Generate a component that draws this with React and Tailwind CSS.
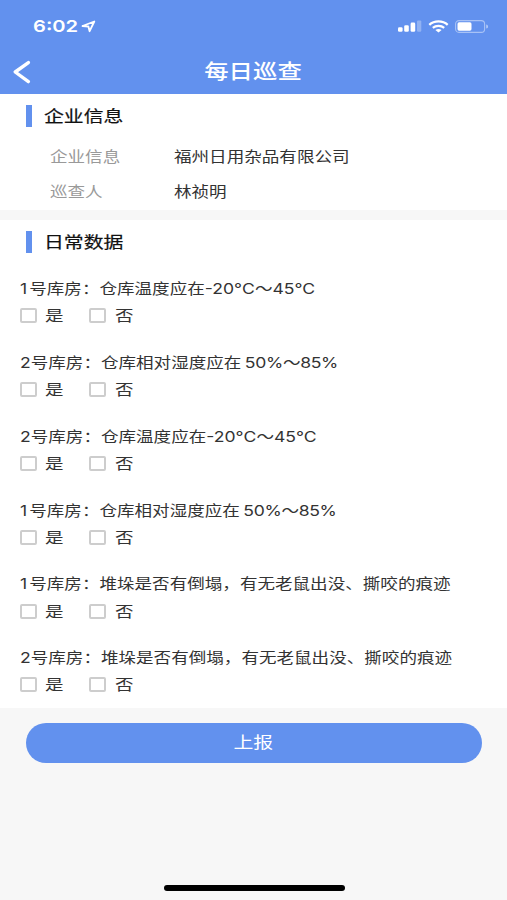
const COMPANY = [
  { label: '企业信息', value: '福州日用杂品有限公司' },
  { label: '巡查人', value: '林祯明' },
];

const QUESTIONS = [
  { room: '1', text: '号库房：仓库温度应在', range: '-20°C～45°C' },
  { room: '2', text: '号库房：仓库相对湿度应在', range: ' 50%～85%' },
  { room: '2', text: '号库房：仓库温度应在', range: '-20°C～45°C' },
  { room: '1', text: '号库房：仓库相对湿度应在', range: ' 50%～85%' },
  { room: '1', text: '号库房：堆垛是否有倒塌，有无老鼠出没、撕咬的痕迹' },
  { room: '2', text: '号库房：堆垛是否有倒塌，有无老鼠出没、撕咬的痕迹' },
];

// Text on this screen is set wider than its natural proportions.
function Wide({ origin = 'origin-left', className = '', children }) {
  return (
    <span className={`inline-block whitespace-pre scale-x-[1.22] ${origin} ${className}`}>
      {children}
    </span>
  );
}

function StatusBar() {
  return (
    <div className="flex h-[49px] items-center pt-[3px] pl-[33px] pr-[18px]">
      <Wide className="w-[38px] text-[16.5px] leading-none font-semibold">6:02</Wide>
      <svg className="ml-[10px] h-[13px] w-[15px]" viewBox="0 0 15 13" fill="none">
        <path d="M1.5 6 L13.3 1.5 L8.6 11.2 L7.4 6.5 Z" stroke="currentColor" strokeWidth="1.8" strokeLinejoin="round" />
      </svg>
      <svg className="ml-auto h-[12px] w-[24px]" viewBox="0 0 24 12" fill="currentColor">
        <rect x="0" y="7.2" width="4.6" height="4.6" rx="1.3" />
        <rect x="6.2" y="5.2" width="4.6" height="6.6" rx="1.3" />
        <rect x="12.6" y="2.6" width="4.6" height="9.2" rx="1.3" />
        <rect x="19" y="0.4" width="4.3" height="11.4" rx="1.2" opacity="0.3" />
      </svg>
      <svg className="ml-[6px] h-[13px] w-[21px]" viewBox="0 0 21 13" fill="none" stroke="currentColor">
        <path d="M1.3 4.8 C6.3 0.2 14.7 0.2 19.7 4.8" strokeWidth="2.3" />
        <path d="M4.8 7.9 C8 5.2 13 5.2 16.2 7.9" strokeWidth="2.2" />
        <path d="M7.4 9.9 C9.2 8.6 11.8 8.6 13.6 9.9 L10.5 12.6 Z" fill="currentColor" stroke="none" />
      </svg>
      <svg className="ml-[6.5px] h-[13px] w-[34px]" viewBox="0 0 34 13" fill="none">
        <rect x="0.6" y="0.6" width="29" height="11.8" rx="3.4" stroke="currentColor" strokeWidth="1.1" opacity="0.45" />
        <rect x="2.5" y="2.3" width="14" height="8.4" rx="1.6" fill="currentColor" />
        <path d="M31.2 4.4 C33.7 5 33.7 8 31.2 8.6 Z" fill="currentColor" opacity="0.5" />
      </svg>
    </div>
  );
}

function NavBar() {
  return (
    <div className="grid h-[45px] grid-cols-[1fr_auto_1fr] items-center pr-[2px]">
      <button className="ml-[12px] w-[20px]" aria-label="返回">
        <svg className="h-[24px] w-[20px]" viewBox="0 0 20 24" fill="none">
          <path d="M16.4 2.6 L3.2 12 L16.4 21.6" stroke="currentColor" strokeWidth="3.4" strokeLinecap="round" strokeLinejoin="round" />
        </svg>
      </button>
      <h1 className="flex text-[20px] leading-none font-medium">
        <Wide origin="origin-center">每日巡查</Wide>
      </h1>
    </div>
  );
}

function SectionTitle({ children }) {
  return (
    <div className="flex h-[22px] items-center pl-[26px] text-[#111]">
      <span className="h-[22px] w-[6px] bg-[#6291ee]" />
      <h2 className="ml-[12px] flex text-[16.3px] leading-none [-webkit-text-stroke:0.2px]">
        <Wide>{children}</Wide>
      </h2>
    </div>
  );
}

function Option({ children }) {
  return (
    <label className="flex w-[69.5px] items-center">
      <span className="h-[15px] w-[17px] rounded-[2px] border-2 border-[#cdcdcd] bg-white" />
      <Wide className="ml-[8.5px] text-[15.2px] leading-none">{children}</Wide>
    </label>
  );
}

function Question({ room, text, range }) {
  return (
    <div className="h-[73.8px] pl-[19.5px]">
      <div className="flex h-[27px] items-center text-[14.4px] leading-none">
        <Wide>
          <span className={room === '1' ? 'mr-[1.7px]' : ''}>{room}</span>
          {text}
          {range && (
            <span className={range.includes('%') ? 'tracking-[-0.25px] [word-spacing:-1px]' : ''}>{range}</span>
          )}
        </Wide>
      </div>
      <div className="flex h-[26px] items-center">
        <Option>是</Option>
        <Option>否</Option>
      </div>
    </div>
  );
}

export default function App() {
  return (
    <div className="flex h-[900px] w-[507px] flex-col overflow-hidden bg-[#f7f7f7] font-[Inter,'Noto_Sans_CJK_SC',sans-serif] text-[#333]">
      <header className="h-[94px] shrink-0 bg-[#6291ee] text-white">
        <StatusBar />
        <NavBar />
      </header>

      <section className="h-[116px] shrink-0 bg-white pt-[11px]">
        <SectionTitle>企业信息</SectionTitle>
        <dl className="mt-[13px]">
          {COMPANY.map((row) => (
            <div key={row.label} className="flex h-[35px] items-center pl-[50px] text-[14.4px] leading-none">
              <dt className="w-[123.5px] text-[#999]">
                <Wide>{row.label}</Wide>
              </dt>
              <dd>
                <Wide>{row.value}</Wide>
              </dd>
            </div>
          ))}
        </dl>
      </section>

      <section className="mt-[10px] h-[488px] shrink-0 bg-white pt-[11px]">
        <SectionTitle>日常数据</SectionTitle>
        <div className="mt-[23px]">
          {QUESTIONS.map((q) => (
            <Question key={q.room + q.text} {...q} />
          ))}
        </div>
      </section>

      <button className="mt-[15px] mr-[25px] ml-[26px] flex h-[40px] shrink-0 items-center justify-center rounded-full bg-[#6291ee] pr-px pb-px text-[16.3px] leading-none text-white">
        <Wide origin="origin-center">上报</Wide>
      </button>

      <div className="mt-auto mb-[9px] ml-[164px] h-[6px] w-[181px] shrink-0 rounded-full bg-black" />
    </div>
  );
}
